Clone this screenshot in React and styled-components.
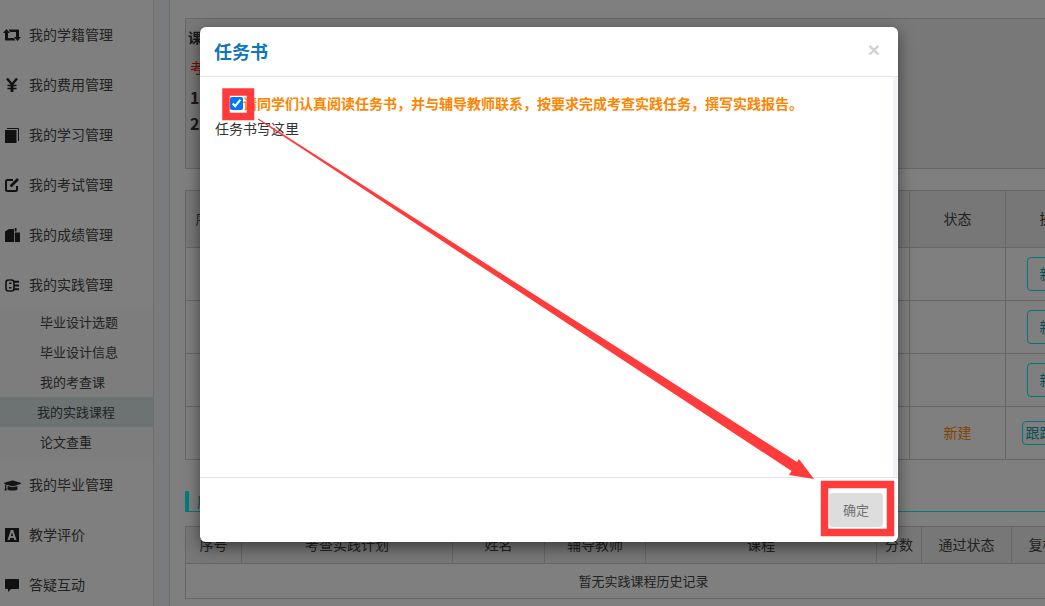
import React from 'react'
import styled, { createGlobalStyle } from 'styled-components'
import { FaGraduationCap } from 'react-icons/fa'

const GlobalStyle = createGlobalStyle`
  html, body {
    margin: 0;
    height: 100%;
    overflow: hidden;
    background: #fff;
    font-family: "Noto Sans CJK SC", "Liberation Sans", sans-serif;
    font-size: 14px;
    color: #444;
  }
  * { box-sizing: border-box; }
`

const Page = styled.div`
  position: relative;
  display: flex;
  width: 1045px;
  height: 606px;
  overflow: hidden;
`

// left navigation
const Sidebar = styled.nav`
  flex: 0 0 154px;
  padding-top: 10px;
  border-right: 1px solid #ddd;
`
const MenuItem = styled.div`
  display: flex;
  align-items: center;
  height: 50px;
  padding-left: 3px;
  gap: 8px;
  line-height: 1;
`
const MenuLabel = styled.span`
  margin-top: -2px;
`
const IconBox = styled.span`
  display: flex;
  flex: 0 0 18px;
  justify-content: center;
  color: #2a2a2a;
`
const SubMenu = styled.div`
  margin-top: -3px;
  margin-bottom: 3px;
  background: #fafafa;
`
const SubItem = styled.div`
  display: flex;
  align-items: center;
  height: 30px;
  padding-bottom: 2px;
  font-size: 13px;
  padding-left: ${p => (p.$active ? '37px' : '40px')};
  background: ${p => (p.$active ? '#d8e6e5' : 'transparent')};
`
const Strip = styled.div`
  flex: 0 0 16px;
  background: #f3f6fb;
  border-right: 1px solid #ddd;
`

// page behind the dialog
const Main = styled.main`
  flex: 0 0 auto;
  width: 946px;
  padding: 18px 15px;
`
const NotePanel = styled.section`
  width: 916px;
  height: 151px;
  padding: 8px 2px;
  background: #f0f0f0;
  border: 1px solid #ccc;
`
const NoteTitle = styled.div`
  font-weight: 700;
  color: #333;
  line-height: 20px;
`
const NoteWarn = styled.div`
  margin-top: 10px;
  padding-left: 2px;
  color: #ff1010;
  line-height: 20px;
`
const NoteLine = styled.div`
  margin-top: ${p => p.$gap}px;
  padding-left: 2px;
  font-size: 16px;
  font-weight: 700;
  color: #333;
  line-height: 20px;
`
const Table = styled.table`
  table-layout: fixed;
  width: 916px;
  border-collapse: collapse;
  margin-top: ${p => p.$top}px;
  text-align: center;
`
const HeadCell = styled.th`
  height: ${p => p.$h}px;
  padding: 0 0 2px;
  border: 1px solid #ccc;
  background: #eee;
  font-weight: 400;
  color: #444;
`
const Cell = styled.td`
  height: ${p => p.$h}px;
  padding: 0 0 2px;
  border: 1px solid #ccc;
`
const EmptyCell = styled(Cell)`
  font-size: 13px;
`
const StateText = styled.span`
  color: #ff8c00;
`
const OutlineButton = styled.span`
  display: inline-block;
  height: 34px;
  margin-top: 2px;
  padding: 0 12px;
  line-height: 30px;
  border: 1px solid #00f0f5;
  border-radius: 4px;
  color: #10a0a8;
  white-space: nowrap;
`
const SmallButton = styled(OutlineButton)`
  height: 24px;
  padding: 0 3px;
  line-height: 20px;
  font-size: 14px;
`
const SectionTitle = styled.h4`
  margin: 31px 0 0;
  height: 21px;
  padding-left: 8px;
  border-left: 4px solid #00f8fa;
  border-bottom: 1px solid #00f8fa;
  font-size: 14px;
  font-weight: 400;
  line-height: 20px;
  color: #10a0a8;
`

// dialog
const Overlay = styled.div`
  position: absolute;
  inset: 0;
  padding: 27px 0 0 200px;
  background: rgba(0, 0, 0, 0.5);
`
const Modal = styled.div`
  display: flex;
  flex-direction: column;
  width: 698px;
  height: 515px;
  background: #fff;
  border-radius: 6px;
  box-shadow: 0 5px 15px rgba(0, 0, 0, 0.5);
`
const ModalHead = styled.header`
  display: flex;
  align-items: center;
  justify-content: space-between;
  height: 50px;
  padding: 0 18px 0 15px;
  border-bottom: 1px solid #e5e5e5;
`
const ModalTitle = styled.h4`
  margin: -2px 0 0 -1px;
  font-size: 18px;
  font-weight: 700;
  color: #0f75bc;
`
const CloseMark = styled.span`
  margin-top: -4px;
  font-family: "Liberation Sans", sans-serif;
  font-size: 21px;
  font-weight: 700;
  line-height: 1;
  color: #d2d2d2;
`
const ModalBody = styled.div`
  height: 400px;
  padding: 16px 0 0 15px;
  border-right: 5px solid #f0f3f8;
`
const AgreeRow = styled.label`
  display: flex;
  align-items: center;
  height: 20px;
  padding-left: 15px;
  font-weight: 700;
  color: #ff8500;
`
const AgreeBox = styled.input`
  flex: 0 0 13px;
  width: 13px;
  height: 13px;
  margin: 0;
`
const BookText = styled.div`
  margin-top: 5px;
  line-height: 20px;
  color: #333;
`
const ModalFoot = styled.footer`
  display: flex;
  justify-content: flex-end;
  height: 65px;
  padding: 15px 15px 0 0;
  border-top: 1px solid #e5e5e5;
`
const ConfirmButton = styled.button`
  width: 54px;
  height: 34px;
  padding: 0 0 2px;
  border: 0;
  border-radius: 4px;
  background: #ddd;
  font: inherit;
  font-size: 13px;
  color: #707070;
`

// red marks somebody drew on the screenshot
const Annotation = styled.svg`
  position: absolute;
  left: 0;
  top: 0;
  pointer-events: none;
`

const RetweetIcon = () => (
  <svg width="18" height="12" viewBox="0 0 18 12" fill="#222">
    <path d="M0 4 3.500 0 7 4H5v5h6l1.500 2.500H3q-1 0-1-1V4z" />
    <path d="M18 8l-3.500 4L11 8h2V3H7L5.500.5H15q1 0 1 1V8z" />
  </svg>
)
const YenIcon = () => (
  <svg width="12" height="14" viewBox="0 0 12 14" fill="none" stroke="#222">
    <path d="M1 .5 6 6.500 11 .5" strokeWidth="2.400" />
    <path d="M6 6v8" strokeWidth="2.800" />
    <path d="M1.500 7.500h9M1.500 10.500h9" strokeWidth="1.500" />
  </svg>
)
const BookIcon = () => (
  <svg width="14" height="15" viewBox="0 0 14 15" fill="#222">
    <rect x="0" y="2" width="11.500" height="13" />
    <path d="M2 .5h11.500V13" fill="none" stroke="#222" strokeWidth="1" />
  </svg>
)
const EditIcon = () => (
  <svg width="14" height="14" viewBox="0 0 14 14" fill="none" stroke="#222">
    <path d="M12 8v3.500a1.500 1.500 0 0 1-1.500 1.500h-8A1.500 1.500 0 0 1 1 11.500v-8A1.500 1.500 0 0 1 2.500 2H8" strokeWidth="2" />
    <path d="M5.500 8.500 13 1" strokeWidth="2.600" />
  </svg>
)
const FilesIcon = () => (
  <svg width="15" height="14" viewBox="0 0 15 14" fill="#222">
    <path d="M0 3.500 4 1h5v13H0z" />
    <path d="M9.800 0h1.700v3.500H9.800zM9.800 4.500H15V14H9.800z" />
  </svg>
)
const PracticeIcon = () => (
  <svg width="14" height="13" viewBox="0 0 14 13" fill="none" stroke="#222" strokeWidth="1.600">
    <rect x="1" y="1" width="8" height="11" rx="2.500" />
    <path d="M4 4.200h2.500M4 8.800h2.500" />
    <path d="M9 2.800h5M9 6.500h5M9 10.200h5" strokeWidth="2" />
  </svg>
)
const FontIcon = () => (
  <svg width="14" height="14" viewBox="0 0 14 14">
    <path fill="#222" fillRule="evenodd" d="M0 0h14v14H0zM5.800 2 2.500 12h2.200l.6-2h3.400l.6 2h2.200L8.200 2zM5.900 8 7 4.400 8.100 8z" />
  </svg>
)
const CommentIcon = () => (
  <svg width="14" height="13" viewBox="0 0 14 13" fill="#222">
    <path d="M1 0h12a1 1 0 0 1 1 1v8a1 1 0 0 1-1 1H6l-3 3v-3H1a1 1 0 0 1-1-1V1a1 1 0 0 1 1-1z" />
  </svg>
)

const topMenu = [
  { label: '我的学籍管理', icon: <RetweetIcon /> },
  { label: '我的费用管理', icon: <YenIcon /> },
  { label: '我的学习管理', icon: <BookIcon /> },
  { label: '我的考试管理', icon: <EditIcon /> },
  { label: '我的成绩管理', icon: <FilesIcon /> },
  { label: '我的实践管理', icon: <PracticeIcon /> },
]
const subMenu = ['毕业设计选题', '毕业设计信息', '我的考查课', '我的实践课程', '论文查重']
const bottomMenu = [
  { label: '我的毕业管理', icon: <FaGraduationCap size={17} /> },
  { label: '教学评价', icon: <FontIcon /> },
  { label: '答疑互动', icon: <CommentIcon /> },
]

const historyHead = [
  { label: '序号', width: 56 },
  { label: '考查实践计划', width: 211 },
  { label: '姓名', width: 92 },
  { label: '辅导教师', width: 101 },
  { label: '课程', width: 231 },
  { label: '分数', width: 45 },
  { label: '通过状态', width: 90 },
  { label: '复核状态', width: 90 },
]

const MenuRow = ({ item }) => (
  <MenuItem>
    <IconBox>{item.icon}</IconBox>
    <MenuLabel>{item.label}</MenuLabel>
  </MenuItem>
)

export default function App() {
  return (
    <Page>
      <GlobalStyle />
      <Sidebar>
        {topMenu.map(m => <MenuRow key={m.label} item={m} />)}
        <SubMenu>
          {subMenu.map(s => (
            <SubItem key={s} $active={s === '我的实践课程'}>{s}</SubItem>
          ))}
        </SubMenu>
        {bottomMenu.map(m => <MenuRow key={m.label} item={m} />)}
      </Sidebar>
      <Strip />
      <Main>
        <NotePanel>
          <NoteTitle>课程任务</NoteTitle>
          <NoteWarn>考查要求</NoteWarn>
          <NoteLine $gap={10}>1</NoteLine>
          <NoteLine $gap={6}>2</NoteLine>
        </NotePanel>

        <Table $top={21}>
          <colgroup>
            <col width="48" />
            <col width="676" />
            <col width="96" />
            <col width="96" />
          </colgroup>
          <thead>
            <tr>
              <HeadCell $h={57}>序号</HeadCell>
              <HeadCell $h={57}>课程</HeadCell>
              <HeadCell $h={57}>状态</HeadCell>
              <HeadCell $h={57}>操作</HeadCell>
            </tr>
          </thead>
          <tbody>
            {[1, 2, 3].map(n => (
              <tr key={n}>
                <Cell $h={53}>{n}</Cell>
                <Cell $h={53} />
                <Cell $h={53} />
                <Cell $h={53}><OutlineButton>新建</OutlineButton></Cell>
              </tr>
            ))}
            <tr>
              <Cell $h={53}>4</Cell>
              <Cell $h={53} />
              <Cell $h={53}><StateText>新建</StateText></Cell>
              <Cell $h={53}><SmallButton>跟踪记录</SmallButton></Cell>
            </tr>
          </tbody>
        </Table>

        <SectionTitle>历史记录</SectionTitle>

        <Table $top={14}>
          <colgroup>
            {historyHead.map(h => <col key={h.label} width={h.width} />)}
          </colgroup>
          <thead>
            <tr>
              {historyHead.map(h => <HeadCell key={h.label} $h={37}>{h.label}</HeadCell>)}
            </tr>
          </thead>
          <tbody>
            <tr>
              <EmptyCell $h={35} colSpan={historyHead.length}>暂无实践课程历史记录</EmptyCell>
            </tr>
          </tbody>
        </Table>
      </Main>

      <Overlay>
        <Modal>
          <ModalHead>
            <ModalTitle>任务书</ModalTitle>
            <CloseMark>×</CloseMark>
          </ModalHead>
          <ModalBody>
            <AgreeRow>
              <AgreeBox type="checkbox" checked readOnly />
              请同学们认真阅读任务书，并与辅导教师联系，按要求完成考查实践任务，撰写实践报告。
            </AgreeRow>
            <BookText>任务书写这里</BookText>
          </ModalBody>
          <ModalFoot>
            <ConfirmButton>确定</ConfirmButton>
          </ModalFoot>
        </Modal>
      </Overlay>

      <Annotation width="1045" height="606" viewBox="0 0 1045 606">
        <rect x="226" y="92" width="24.500" height="24.500" fill="none" stroke="#ff3b3b" strokeWidth="7.500" />
        <rect x="824.500" y="484.500" width="66" height="48" fill="none" stroke="#ff3b3b" strokeWidth="7.500" />
        <path d="M258.500 118.500 L797 462 L799 459 L814 479 L789 475 L791.500 471 L257.800 119.500 Z" fill="#ff3b3b" />
      </Annotation>
    </Page>
  )
}
